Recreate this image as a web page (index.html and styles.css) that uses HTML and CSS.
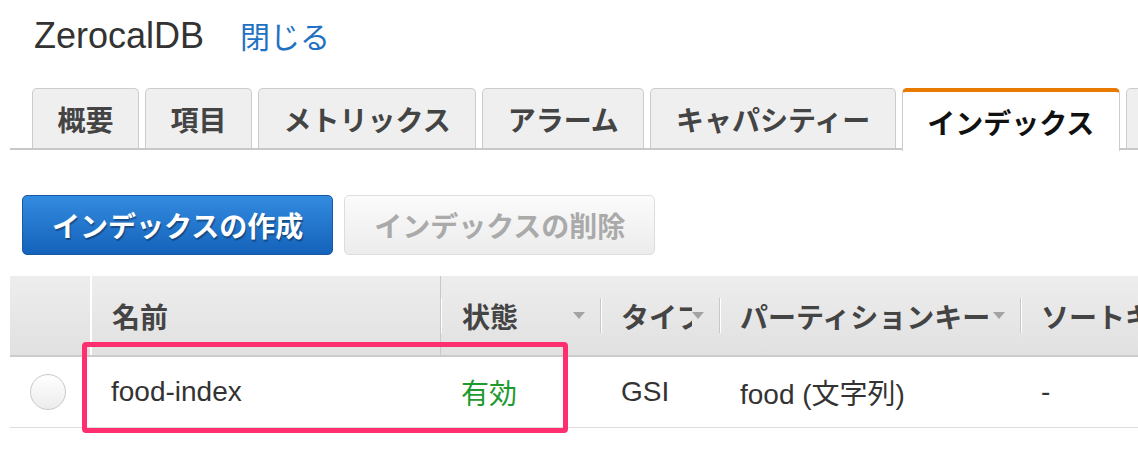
FILE: index.html
```html
<!DOCTYPE html>
<html lang="ja">
<head>
    <meta charset="UTF-8">
    <meta name="viewport" content="width=device-width, initial-scale=1.0">
    <title>ZerocalDB - インデックス</title>
    <link rel="stylesheet" href="styles.css">
</head>
<body>
    <div class="page">
        <!-- Table title -->
        <div class="header">
            <span class="table-name">ZerocalDB</span>
            <a class="close-link" href="#">閉じる</a>
        </div>

        <!-- Tabs -->
        <div class="tabs">
            <div class="tab">概要</div>
            <div class="tab">項目</div>
            <div class="tab">メトリックス</div>
            <div class="tab">アラーム</div>
            <div class="tab">キャパシティー</div>
            <div class="tab active">インデックス</div>
            <div class="tab">グローバルテーブル</div>
        </div>

        <!-- Actions -->
        <div class="actions">
            <button class="btn btn-primary">インデックスの作成</button>
            <button class="btn btn-disabled" disabled>インデックスの削除</button>
        </div>

        <!-- Index list -->
        <div class="index-table">
            <div class="thead">
                <div class="th th-select"></div>
                <div class="th th-name"><div class="th-label"><span class="th-text">名前</span></div></div>
                <div class="th th-status"><div class="th-label"><span class="th-text">状態</span><span class="sort"></span></div></div>
                <div class="th"><div class="th-label"><span class="th-text">タイプ</span><span class="sort"></span></div></div>
                <div class="th"><div class="th-label"><span class="th-text">パーティションキー</span><span class="sort"></span></div></div>
                <div class="th"><div class="th-label"><span class="th-text">ソートキー</span><span class="sort"></span></div></div>
            </div>
            <div class="row">
                <div class="td"><span class="radio"></span></div>
                <div class="td">food-index</div>
                <div class="td status-active">有効</div>
                <div class="td">GSI</div>
                <div class="td">food (文字列)</div>
                <div class="td">-</div>
            </div>

            <!-- annotation box -->
            <div class="highlight"></div>
        </div>
    </div>
</body>
</html>
```

FILE: styles.css
```css
body {
    margin: 0;
    padding: 0;
    overflow: hidden;
    background-color: #fff;
    font-family: "Liberation Sans", "Noto Sans CJK JP", sans-serif;
    color: #333;
}

.page {
    padding-left: 10px;
    padding-bottom: 40px;
}

.header {
    display: flex;
    align-items: baseline;
    height: 36px;
    padding-top: 18px;
    padding-left: 24px;
    line-height: 36px;
}

.table-name {
    font-size: 36px;
    color: #333;
}

.close-link {
    margin-left: 36px;
    font-size: 30px;
    color: #1f72c2;
    text-decoration: none;
}

.tabs {
    display: flex;
    gap: 6px;
    margin-top: 34px;
    padding-left: 22px;
    height: 60px;
    border-bottom: 2px solid #c8c8c8;
    white-space: nowrap;
}

.tab {
    flex-shrink: 0;
    display: flex;
    align-items: center;
    height: 59px;
    padding: 0 24.5px;
    border: 1px solid #ccc;
    border-bottom: none;
    border-radius: 5px 5px 0 0;
    background-color: #efefef;
    font-size: 28px;
    font-weight: bold;
    color: #444;
}

.tab.active {
    height: 58px;
    margin-bottom: -2px;
    padding-top: 1px;
    border-top: 4px solid #e87a00;
    background-color: #fff;
    color: #111;
}

.actions {
    display: flex;
    gap: 11px;
    margin-top: 45px;
    padding-left: 12px;
}

.btn {
    height: 60px;
    padding: 0 29px;
    border-radius: 5px;
    font-family: "Liberation Sans", "Noto Sans CJK JP", sans-serif;
    font-size: 28px;
    font-weight: bold;
}

.btn-primary {
    background: linear-gradient(#338bdf, #1462bb);
    border: 1px solid #155aa5;
    color: #fff;
    text-shadow: 1px 2px 1px rgba(0, 0, 0, 0.35);
}

.btn-disabled {
    background: linear-gradient(#fbfbfb, #ececec);
    border: 1px solid #ddd;
    color: #aaa;
}

.index-table {
    position: relative;
    margin-top: 21px;
}

.thead,
.row {
    display: grid;
    grid-template-columns: 80px 350px 160px 119px 301px 300px;
}

.thead {
    height: 79px;
    background: linear-gradient(#ededed, #e1e1e1);
    border-bottom: 2px solid #cbcbcb;
}

.th {
    display: flex;
    align-items: center;
    min-width: 0;
}

.th-name {
    border-left: 2px solid #fff;
}

.th-status {
    border-left: 1px solid #c8c8c8;
}

.th-label {
    display: flex;
    align-items: center;
    width: 100%;
    height: 35px;
    padding-left: 20px;
    border-left: 1px solid #c8c8c8;
    box-shadow: inset 1px 0 0 #fff;
    box-sizing: border-box;
    min-width: 0;
}

.th-name .th-label {
    border-left: none;
    box-shadow: none;
}

.th-status .th-label {
    border-left: 1px solid #fff;
    box-shadow: none;
}

.th-text {
    flex: 1;
    min-width: 0;
    overflow: hidden;
    white-space: nowrap;
    font-size: 28px;
    font-weight: bold;
    color: #444;
}

.sort {
    flex-shrink: 0;
    width: 0;
    height: 0;
    margin-right: 15px;
    border-left: 6px solid transparent;
    border-right: 6px solid transparent;
    border-top: 7px solid #a3a3a3;
}

.row {
    height: 70px;
    border-bottom: 1px solid #ddd;
}

.td {
    display: flex;
    align-items: center;
    padding-left: 21px;
    font-size: 28px;
    color: #333;
    white-space: nowrap;
}

.status-active {
    color: #1f9a2e;
}

.radio {
    width: 34px;
    height: 34px;
    margin-left: -1px;
    border: 1px solid #c8c8c8;
    border-radius: 50%;
    background: linear-gradient(#fff, #ececec);
}

.highlight {
    position: absolute;
    left: 72px;
    top: 66px;
    width: 486px;
    height: 91px;
    box-sizing: border-box;
    border: 5px solid #ff2e6e;
    border-radius: 4px;
}
```
